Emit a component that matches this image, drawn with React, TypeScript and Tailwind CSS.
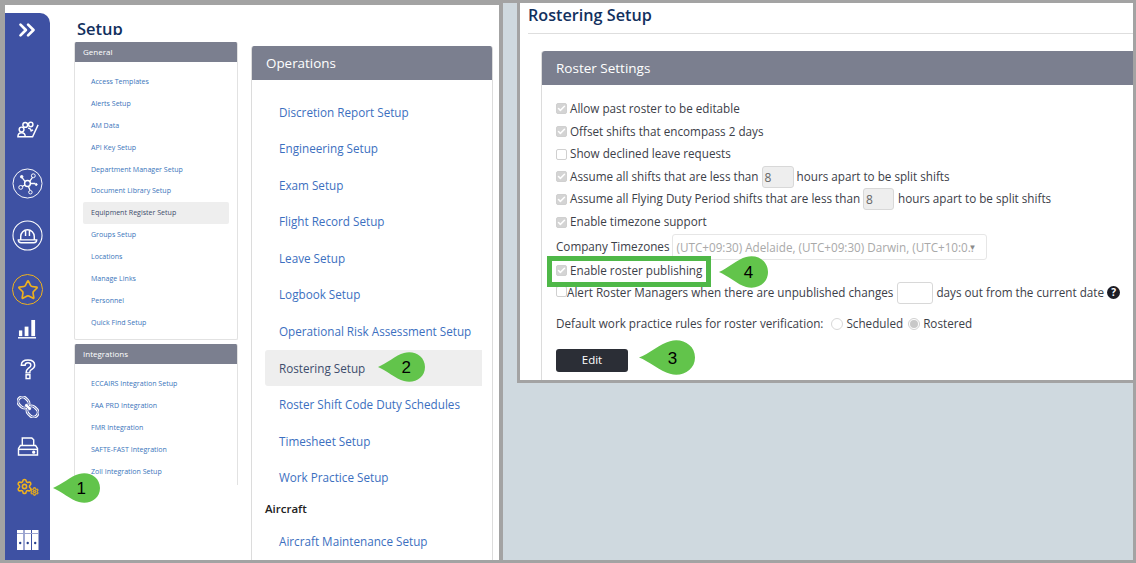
import { Check, ChevronsRight, Settings, Star } from 'lucide-react';

const generalLinks = [
  'Access Templates', 'Alerts Setup', 'AM Data', 'API Key Setup', 'Department Manager Setup', 'Document Library Setup',
  'Equipment Register Setup', 'Groups Setup', 'Locations', 'Manage Links', 'Personnel', 'Quick Find Setup',
];
const integrationLinks = [
  'ECCAIRS Integration Setup', 'FAA PRD Integration', 'FMR Integration', 'SAFTE-FAST Integration', 'Zoll Integration Setup',
];
const operationLinks = [
  'Discretion Report Setup', 'Engineering Setup', 'Exam Setup', 'Flight Record Setup', 'Leave Setup', 'Logbook Setup',
  'Operational Risk Assessment Setup', 'Rostering Setup', 'Roster Shift Code Duty Schedules', 'Timesheet Setup', 'Work Practice Setup',
];

function Callout({ n, className }: { n: number; className: string }) {
  return (
    <div className={`absolute ${className}`}>
      <svg viewBox="0 0 47 30" preserveAspectRatio="none" className="absolute inset-0 w-full h-full">
        <path d="M0 15 C8 12 18 3 26 1 C36 -2 47 4 47 15 C47 26 36 32 26 29 C18 27 8 18 0 15 Z" fill="#62c44b" />
      </svg>
      <span className="absolute left-[60%] top-1/2 -translate-x-1/2 -translate-y-1/2 text-[17px] leading-none text-black font-['Liberation_Sans',sans-serif]">{n}</span>
    </div>
  );
}

function Box({ checked = true, className = '' }: { checked?: boolean; className?: string }) {
  return (
    <span className={`w-[11px] h-[11px] shrink-0 rounded-[2px] border border-[#d0d0d0] flex items-center justify-center ${checked ? 'bg-[#d4d4d4]' : 'bg-white'} ${className}`}>
      {checked && <Check className="w-[9px] h-[9px] text-white" strokeWidth={4} />}
    </span>
  );
}

function SmallInput({ value, className }: { value?: string; className: string }) {
  return (
    <span className={`inline-flex items-end h-[22px] rounded-[3px] border border-[#d8d8d8] px-[2px] text-[12px] leading-[19px] text-[#666] ${className}`}>
      {value}
    </span>
  );
}

function Sidebar() {
  return (
    <div className="w-[45px] mt-2 shrink-0 bg-[#3e51a3] rounded-tr-[10px] flex flex-col items-center text-white">
      <ChevronsRight className="w-[26px] h-[26px] mt-[4px] -translate-x-[1px]" strokeWidth={2.5} />
      {/* team tick */}
      <svg viewBox="0 0 24 18" className="w-[22px] h-[17px] mt-[78px]" fill="none" stroke="white" strokeWidth="1.6">
        <circle cx="9" cy="4" r="2.6" /><circle cx="15" cy="3.500" r="2.400" /><circle cx="5" cy="9" r="2.600" />
        <path d="M1 17c0-3 1.500-4.500 4-4.500s4 1.500 4 4.500zM9 17h8L23 4M12 7.500c2 0 3 1 3.500 3l2-1" />
      </svg>
      {/* network */}
      <svg viewBox="0 0 32 32" className="w-[31px] h-[31px] mt-[30px]" fill="none" stroke="white" strokeWidth="1">
        <circle cx="16" cy="16" r="15" />
        <circle cx="16" cy="16" r="3" strokeWidth="1.500" /><circle cx="22" cy="8" r="2" /><circle cx="9" cy="20" r="2" />
        <circle cx="19" cy="25" r="1.800" /><circle cx="10" cy="9" r="1.300" fill="white" /><circle cx="25" cy="17" r="1" fill="white" />
        <path d="M18 14l3-4M13.500 17.500l-3 1.500M17 19l1.500 4M13.500 14l-3-4M19 16h5" strokeWidth="1.300" />
      </svg>
      {/* hard hat */}
      <svg viewBox="0 0 32 32" className="w-[31px] h-[31px] mt-[21px]" fill="none" stroke="white" strokeWidth="1.100">
        <circle cx="16" cy="16" r="15" />
        <path d="M9 20v-3a7 7 0 0 1 14 0v3M14 10.500v6M18 10.500v6M6.500 20.500h19c0 2-1.500 3-3 3h-13c-1.500 0-3-1-3-3z" strokeWidth="1.500" />
      </svg>
      {/* star */}
      <div className="w-[31px] h-[31px] mt-[23px] rounded-full border border-[#efb11d] flex items-center justify-center">
        <Star className="w-[22px] h-[22px] text-[#efb11d]" strokeWidth={1.800} />
      </div>
      {/* bars */}
      <svg viewBox="0 0 20 21" className="w-[19px] h-[20px] mt-[14px]" fill="white">
        <rect x="1" y="12" width="3.500" height="6" /><rect x="7" y="8" width="4" height="10" /><rect x="14" y="1" width="4" height="17" />
        <rect x="0" y="19" width="19" height="1.500" />
      </svg>
      {/* question */}
      <svg viewBox="0 0 16 22" className="w-[16px] h-[21px] mt-[20px]" fill="none" stroke="white" strokeWidth="1.500">
        <path d="M1 6.500C1 3 4 1 8 1s7 2 7 5.500c0 3-2.500 4-4 5s-1 2-1 3H6c0-2 .5-3.500 2.500-5 1.500-1 2.500-1.500 2.500-3 0-1.500-1.500-2.500-3-2.500S5 5 5 6.500z" />
        <rect x="6" y="16.500" width="4" height="4" />
      </svg>
      {/* chain */}
      <svg viewBox="0 0 24 24" className="w-[22px] h-[22px] mt-[16px]" fill="none" stroke="white">
        <g transform="rotate(-45 12 12)">
          <rect x="7" y="-1.500" width="10" height="13" rx="5" strokeWidth="3.200" />
          <rect x="7" y="12.500" width="10" height="13" rx="5" strokeWidth="3.200" />
          <rect x="7" y="-1.500" width="10" height="13" rx="5" strokeWidth="1" stroke="#3e51a3" />
          <rect x="7" y="12.500" width="10" height="13" rx="5" strokeWidth="1" stroke="#3e51a3" />
          <path d="M12 8v8" strokeWidth="2.500" />
        </g>
      </svg>
      {/* printer */}
      <svg viewBox="0 0 22 20" className="w-[22px] h-[19px] mt-[19px]" fill="none" stroke="white" strokeWidth="1.500">
        <path d="M5 9V1h10l2 2v6M1 19v-7l2-3h16l2 3v7z" />
        <path d="M1 13h20" /><circle cx="17" cy="16" r="1" fill="white" />
      </svg>
      {/* gears */}
      <div className="relative w-[23px] h-[18px] mt-[22px]">
        <Settings className="absolute left-0 top-0 w-[17px] h-[17px] text-[#efb11d]" strokeWidth={2.200} />
        <Settings className="absolute right-0 bottom-0 w-[9px] h-[9px] text-[#dba526]" strokeWidth={3.500} />
      </div>
      {/* binders */}
      <svg viewBox="0 0 22 20" className="w-[22px] h-[20px] mt-[34px]" fill="white">
        <rect x="0" y="0" width="6.500" height="20" /><rect x="7.500" y="0" width="6.500" height="20" /><rect x="15" y="0" width="6.500" height="20" />
        <rect x="0" y="3" width="21.500" height="1" fill="#9aa3cf" />
        <circle cx="3.200" cy="13" r="1.200" fill="#27408f" /><circle cx="10.700" cy="13" r="1.200" fill="#27408f" /><circle cx="18.200" cy="13" r="1.200" fill="#27408f" />
      </svg>
    </div>
  );
}

function MiniPanel({ title, links, selected, className }: { title: string; links: string[]; selected?: string; className: string }) {
  return (
    <div className={`w-[164px] rounded-t-[2px] border-x border-[#e2e2e2] overflow-hidden ${className}`}>
      <div className="-mx-px h-5 bg-[#7b7f8f] text-white text-[8px] leading-5 pl-[9px]">{title}</div>
      <div className="px-2 pt-[9px]">
        {links.map((l) => (
          <div
            key={l}
            className={`h-[21.900px] leading-[21.900px] pl-2 text-[7.050px] whitespace-nowrap rounded-[2px] ${l === selected ? 'bg-[#eeeeee] text-[#3d4d6c]' : 'text-[#3b75bb]'}`}
          >
            {l}
          </div>
        ))}
      </div>
    </div>
  );
}

function OperationsPanel() {
  return (
    <div className="w-[242px] mt-[41px] ml-[13px] rounded-t-[3px] border-x border-[#dcdcdc] h-[514px] overflow-hidden">
      <div className="-mx-px h-[34px] bg-[#7b7f8f] text-white text-[13.400px] leading-[35px] pl-[15px]">Operations</div>
      <div className="pl-[13px] pr-[10px] pt-[13.500px]">
        {operationLinks.map((l) => (
          <div
            key={l}
            className={`h-[36.600px] leading-[36px] pl-[14px] text-[11.700px] whitespace-nowrap rounded-l-[3px] ${l === 'Rostering Setup' ? 'bg-[#eeeeee] text-[#3d4d6c]' : 'text-[#3c6fc0]'}`}
          >
            {l}
          </div>
        ))}
        <div className="mt-[5px] text-[11.500px] leading-[16px] font-semibold text-[#222]">Aircraft</div>
        <div className="mt-[6px] h-[36px] leading-[36px] pl-[14px] text-[11.700px] text-[#3c6fc0]">Aircraft Maintenance Setup</div>
      </div>
    </div>
  );
}

function RosterSettings() {
  const row = 'flex items-center text-[11.700px] text-[#3c4048] whitespace-nowrap';
  return (
    <div className="ml-[13px] mt-[17px] border-l border-[#dcdcdc] flex-1 min-h-0 rounded-tl-[3px]">
      <div className="h-[34px] bg-[#7b7f8f] text-white text-[13.500px] leading-[35px] pl-[14px] rounded-tl-[3px]">Roster Settings</div>
      <div className="pl-[14px] pt-[12px]">
        <div className={`${row} h-[23px]`}><Box className="mr-[3px]" />Allow past roster to be editable</div>
        <div className={`${row} h-[23px]`}><Box className="mr-[3px]" />Offset shifts that encompass 2 days</div>
        <div className={`${row} h-[22.500px]`}><Box checked={false} className="mr-[3px]" />Show declined leave requests</div>
        <div className={`${row} h-[22px]`}>
          <Box className="mr-[3px]" />Assume all shifts that are less than
          <SmallInput value="8" className="w-[32px] bg-[#eeeeee] ml-[3px] mr-[3px]" />hours apart to be split shifts
        </div>
        <div className={`${row} h-[23px]`}>
          <Box className="mr-[3px]" />Assume all Flying Duty Period shifts that are less than
          <SmallInput value="8" className="w-[31px] bg-[#eeeeee] ml-[3px] mr-[4px]" />hours apart to be split shifts
        </div>
        <div className={`${row} h-[23px]`}><Box className="mr-[3px]" />Enable timezone support</div>
        <div className={`${row} h-[26px]`}>
          Company Timezones
          <div className="relative w-[315px] h-[26px] ml-[2px] border border-[#e6e6e6] rounded-[3px] pl-[4px] leading-[24px] text-[#a9a9a9]">
            (UTC+09:30) Adelaide, (UTC+09:30) Darwin, (UTC+10:0..
            <span className="absolute right-[9px] top-0 text-[8px] text-[#8a8a8a]">▼</span>
          </div>
        </div>
        <div className={`${row} h-[22px]`}><Box className="mr-[3px]" />Enable roster publishing</div>
        <div className={`${row} h-[22px]`}>
          <Box checked={false} className="-translate-y-[1px]" />Alert Roster Managers when there are unpublished changes
          <SmallInput className="w-[36px] ml-[4px] mr-[3px]" />days out from the current date
          <span className="ml-[3px] w-[13px] h-[13px] rounded-full bg-[#1c1c24] text-white text-[10px] leading-[13px] font-bold text-center">?</span>
        </div>
        <div className={`${row} h-[22px] mt-[9px]`}>
          Default work practice rules for roster verification:
          <span className="w-[12px] h-[12px] ml-[8px] mr-[3px] rounded-full border border-[#d8d8d8] bg-white" />Scheduled
          <span className="w-[12px] h-[12px] ml-[5px] mr-[3px] rounded-full border border-[#d0d0d0] flex items-center justify-center">
            <span className="w-[8px] h-[8px] rounded-full bg-[#c8c8c8]" />
          </span>Rostered
        </div>
        <button className="block mt-[14px] w-[72px] h-[23px] rounded-[3px] bg-[#2b2e36] text-white text-[11.500px]">Edit</button>
      </div>
    </div>
  );
}

export default function App() {
  return (
    <div className="relative w-[1136px] h-[563px] overflow-hidden bg-[#a3a3a3] flex pt-[3px] pb-[3px] pl-[5px] pr-[3px] font-['Open_Sans',sans-serif]">
      {/* left capture */}
      <div className="w-[494px] mt-[2px] bg-white flex shrink-0">
        <Sidebar />
        <div className="w-[164px] ml-[24px] shrink-0">
          <div className="h-[16px] mt-[14px] mb-[7px] overflow-hidden pl-[3px] text-[16.500px] leading-[20px] font-semibold text-[#12305e]">Setup</div>
          <MiniPanel title="General" links={generalLinks} selected="Equipment Register Setup" className="h-[298px] border-b rounded-b-[2px]" />
          <MiniPanel title="Integrations" links={integrationLinks} className="mt-[4px] h-[141px]" />
        </div>
        <OperationsPanel />
      </div>

      {/* right capture */}
      <div className="ml-[4px] flex-1 bg-[#cfd9df] pl-[14px]">
        <div className="h-[380px] border-l-[3px] border-b-[3px] border-[#a3a3a3] bg-white flex flex-col pl-[8px]">
          <div className="h-[31px] border-b border-[#dedede] text-[16.200px] leading-[24px] font-semibold text-[#12305e] shrink-0">Rostering Setup</div>
          <RosterSettings />
        </div>
      </div>

      {/* annotations */}
      <div className="absolute left-[547px] top-[256px] w-[164px] h-[31px] border-[5px] border-[#4fb848]" />
      <Callout n={1} className="left-[53px] top-[473px] w-[47px] h-[30px]" />
      <Callout n={2} className="left-[378px] top-[352px] w-[47px] h-[30px]" />
      <Callout n={3} className="left-[639px] top-[340px] w-[56px] h-[35px]" />
      <Callout n={4} className="left-[719px] top-[256px] w-[49px] h-[32px]" />
    </div>
  );
}
